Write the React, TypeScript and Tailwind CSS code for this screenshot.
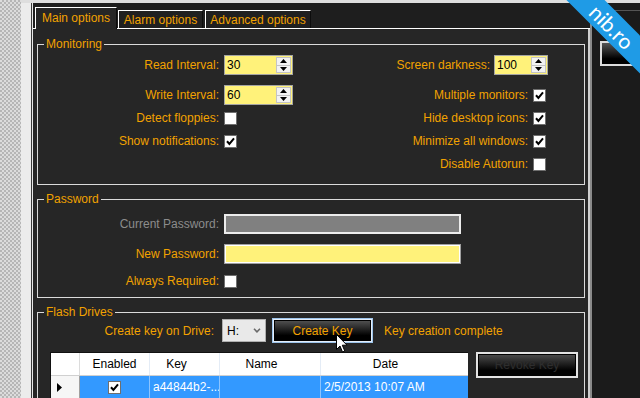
import React from "react";

const OR = "text-[#f2a200]";

function Check({ checked }: { checked?: boolean }) {
  return (
    <span className="flex h-[13px] w-[13px] shrink-0 items-center justify-center border border-[#6f6f6f] bg-white">
      {checked && (
        <svg width="9" height="9" viewBox="0 0 9 9">
          <path d="M1 4.3 L3.4 6.9 L8 1.4" stroke="#000" strokeWidth="2" fill="none" />
        </svg>
      )}
    </span>
  );
}

function Spin({ value, wClass }: { value: string; wClass: string }) {
  return (
    <div className={`flex h-[20px] ${wClass} border border-[#a4a4a4] bg-[#fff27a]`}>
      <span className="flex-1 pl-[2px] leading-[18px] text-black">{value}</span>
      <div className="my-[1px] mr-[1px] flex w-[15px] flex-col">
        <div className="flex flex-1 items-center justify-center border border-[#c4c4c4] bg-[#f2f2f2]">
          <svg width="7" height="4" viewBox="0 0 7 4">
            <path d="M0 4 L3.5 0 L7 4 Z" fill="#000" />
          </svg>
        </div>
        <div className="flex flex-1 items-center justify-center border border-t-0 border-[#c4c4c4] bg-[#f2f2f2]">
          <svg width="7" height="4" viewBox="0 0 7 4">
            <path d="M0 0 L7 0 L3.5 4 Z" fill="#000" />
          </svg>
        </div>
      </div>
    </div>
  );
}

function LRow({ label, children, mt, dim }: { label: string; children: React.ReactNode; mt: string; dim?: boolean }) {
  return (
    <div className={`flex h-[20px] items-center ${mt}`}>
      <span className={`w-[181px] text-right ${dim ? "text-[#8c8c8c]" : OR}`}>{label}</span>
      <div className="ml-[5px] flex items-center">{children}</div>
    </div>
  );
}

function RRow({ label, children, mt, gap }: { label: string; children: React.ReactNode; mt: string; gap: string }) {
  return (
    <div className={`flex h-[20px] items-center ${mt}`}>
      <span className={`${OR} whitespace-nowrap`}>{label}</span>
      <div className={`${gap} flex items-center`}>{children}</div>
    </div>
  );
}

export default function App() {
  return (
    <div className="relative flex h-[398px] w-[640px] overflow-hidden bg-[#1e1e1e] font-['Liberation_Sans',Arial,sans-serif] text-[12px] leading-[14px]">
      {/* checker strip */}
      <div className="w-[21px] shrink-0 bg-[repeating-conic-gradient(#b6b6b6_0_25%,#dcdcdc_0_50%)] bg-[length:4px_4px]" />
      <div className="flex min-w-0 flex-1 flex-col">
        <div className="h-[3px] shrink-0 bg-[#dedede]" />
        <div className="flex min-h-0 flex-1">
          <div className="w-[10px] shrink-0 bg-[#ececec]" />
          <div className="w-[1px] shrink-0 bg-[#3a3a3a]" />
          {/* tab control */}
          <div className="flex w-[558px] shrink-0 flex-col border-l border-[#e8e8e8]">
            <div className="flex h-[26px] shrink-0 items-end border-b border-white pl-[2px]">
              <div className={`relative -mb-px flex h-[22px] w-[82px] items-center justify-center border-l border-t border-r border-l-white border-t-white border-r-[#0c0c0c] bg-[#262626] pb-[1px] ${OR}`}>
                Main options
              </div>
              <div className={`ml-[1px] flex h-[18px] w-[85px] items-center justify-center border-l border-t border-r border-l-white border-t-white border-r-[#0c0c0c] bg-[#202020] pt-[1px] ${OR}`}>
                Alarm options
              </div>
              <div className={`ml-[2px] flex h-[18px] w-[106px] items-center justify-center border-l border-t border-r border-l-white border-t-white border-r-[#0c0c0c] bg-[#202020] pt-[1px] ${OR}`}>
                Advanced options
              </div>
            </div>
            {/* page */}
            <div className="flex min-h-0 flex-1 flex-col border-r-2 border-[#cfcfcf] bg-[#262626] pl-[4px] pr-[3px] pt-[8px]">
              {/* Monitoring */}
              <fieldset className="h-[148px] shrink-0 border border-[#dadada] pt-[4px]">
                <legend className={`ml-[6px] px-[2px] leading-[14px] ${OR}`}>Monitoring</legend>
                <div className="flex">
                  <div className="flex w-[255px] flex-col">
                    <LRow label="Read Interval:" mt="">
                      <Spin value="30" wClass="w-[69px]" />
                    </LRow>
                    <LRow label="Write Interval:" mt="mt-[10px]">
                      <Spin value="60" wClass="w-[69px]" />
                    </LRow>
                    <LRow label="Detect floppies:" mt="mt-[3px]">
                      <Check />
                    </LRow>
                    <LRow label="Show notifications:" mt="mt-[3px]">
                      <Check checked />
                    </LRow>
                  </div>
                  <div className="flex flex-1 flex-col items-end pr-[36px]">
                    <RRow label="Screen darkness:" mt="" gap="ml-[4px]">
                      <Spin value="100" wClass="w-[54px]" />
                    </RRow>
                    <RRow label="Multiple monitors:" mt="mt-[10px]" gap="ml-[5px] mr-[2px]">
                      <Check checked />
                    </RRow>
                    <RRow label="Hide desktop icons:" mt="mt-[3px]" gap="ml-[5px] mr-[2px]">
                      <Check checked />
                    </RRow>
                    <RRow label="Minimize all windows:" mt="mt-[3px]" gap="ml-[5px] mr-[2px]">
                      <Check checked />
                    </RRow>
                    <RRow label="Disable Autorun:" mt="mt-[3px]" gap="ml-[5px] mr-[2px]">
                      <Check />
                    </RRow>
                  </div>
                </div>
              </fieldset>

              {/* Password */}
              <fieldset className="mt-[7px] h-[106px] shrink-0 border border-[#dadada] pt-[8px]">
                <legend className={`ml-[6px] px-[2px] leading-[14px] ${OR}`}>Password</legend>
                <LRow label="Current Password:" mt="" dim>
                  <div className="h-[20px] w-[237px] border-2 border-[#ececec] bg-[#808080]" />
                </LRow>
                <LRow label="New Password:" mt="mt-[10px]">
                  <div className="h-[20px] w-[237px] border border-[#a0a0a0] bg-[#fff27a] shadow-[inset_0_0_0_1px_#ffffff]" />
                </LRow>
                <LRow label="Always Required:" mt="mt-[7px]">
                  <Check />
                </LRow>
              </fieldset>

              {/* Flash Drives */}
              <fieldset className="mt-[7px] h-[130px] shrink-0 border border-[#dadada]">
                <legend className={`ml-[6px] px-[2px] leading-[14px] ${OR}`}>Flash Drives</legend>
                <div className="-mt-[1px] flex h-[25px] items-center">
                  <span className={`w-[176px] text-right ${OR}`}>Create key on Drive:</span>
                  <div className="ml-[8px] flex h-[23px] w-[44px] items-center justify-between border border-[#b0b0b0] bg-[#e9e9e9] pl-[4px] pr-[4px] text-black">
                    <span>H:</span>
                    <svg width="8" height="5" viewBox="0 0 8 5">
                      <path d="M1 0.8 L4 3.8 L7 0.8" stroke="#6a6a6a" strokeWidth="1.6" fill="none" />
                    </svg>
                  </div>
                  <div className={`ml-[6px] flex h-[25px] w-[101px] items-center justify-center border border-[#9cc3ea] bg-[linear-gradient(#5a5a5a,#000000_72%)] shadow-[inset_0_0_0_1px_#e4eefa,inset_0_0_0_2px_#000000] ${OR}`}>
                    Create Key
                  </div>
                  <span className={`ml-[11px] ${OR}`}>Key creation complete</span>
                </div>
                <div className="mt-[9px] flex">
                  {/* grid */}
                  <div className="ml-[12px] flex w-[418px] flex-col border-l border-t border-[#111111]">
                    <div className="flex h-[22px] bg-white text-black">
                      <div className="w-[28px]" />
                      <div className="flex w-[70px] items-center justify-center border-l border-[#dcdcdc]">Enabled</div>
                      <div className="flex w-[70px] items-center justify-center border-l border-[#e4ecf6] pr-[16px]">Key</div>
                      <div className="flex w-[101px] items-center justify-center border-l border-[#e4ecf6] pr-[17px]">Name</div>
                      <div className="flex w-[148px] items-center justify-center border-l border-[#e4ecf6] pr-[18px]">Date</div>
                    </div>
                    <div className="flex h-[23px] border-t border-[#d0d0d0] text-white">
                      <div className="flex w-[28px] items-center bg-[#f6f6f6] pl-[6px]">
                        <svg width="5" height="9" viewBox="0 0 5 9">
                          <path d="M0 0 L5 4.5 L0 9 Z" fill="#000" />
                        </svg>
                      </div>
                      <div className="flex w-[70px] items-center justify-center border-l border-[#a0a0a0] bg-[#3399ff]">
                        <Check checked />
                      </div>
                      <div className="flex w-[70px] items-center border-l border-[#8cc4ff] bg-[#3399ff] pl-[3px]">a44844b2-...</div>
                      <div className="flex w-[101px] items-center border-l border-[#8cc4ff] bg-[#3399ff]" />
                      <div className="flex w-[148px] items-center border-l border-[#8cc4ff] bg-[#3399ff] pl-[3px]">2/5/2013 10:07 AM</div>
                    </div>
                  </div>
                  <div className="ml-[8px] flex h-[26px] w-[102px] items-center justify-center border-2 border-[#e2e2e2] bg-[linear-gradient(#4e4e4e,#000000_75%)] text-[#2e2e2e] shadow-[inset_0_0_0_1px_#000000]">
                    Revoke Key
                  </div>
                </div>
              </fieldset>
            </div>
          </div>
          {/* right panel */}
          <div className="flex flex-1 flex-col border-l-2 border-[#8a8a8a] bg-[#1b1b1b]">
            <div className="ml-[8px] mt-[7px] h-[1px] bg-[#555555]" />
            <div className="ml-[8px] mt-[30px] h-[25px] w-[50px] shrink-0 border-2 border-[#dcdcdc] bg-[linear-gradient(#555555,#000000_75%)]" />
          </div>
        </div>
      </div>

      {/* mouse cursor */}
      <svg className="absolute left-[336px] top-[334px]" width="12" height="19" viewBox="0 0 12 19">
        <path d="M0.5 0.5 L0.5 15.5 L4 12 L6.5 18 L8.8 17 L6.3 11.2 L11 11.2 Z" fill="#fff" stroke="#000" strokeWidth="1" />
      </svg>

      {/* banner */}
      <div className="absolute left-[537px] top-[13px] flex h-[27px] w-[150px] rotate-45 items-center justify-center bg-[#1f9be6] font-['Lato',sans-serif] text-[21px] leading-none text-white">
        nib.ro
      </div>
    </div>
  );
}
